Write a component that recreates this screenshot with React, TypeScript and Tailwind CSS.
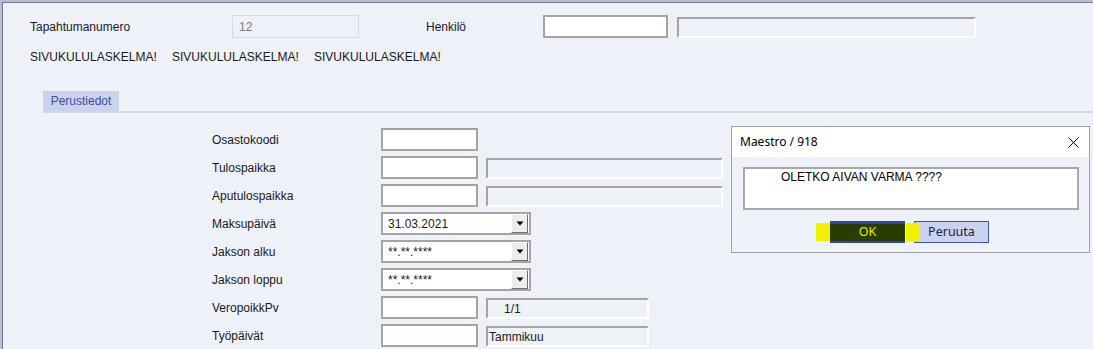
import React from "react";

const Input = ({ w = 97 }: { w?: number }) => (
  <div
    className="h-[23px] border-2 border-[#a4a4a4] bg-white shrink-0"
    style={{ width: w }}
  />
);

const Sunken = ({ w, children, pl = 2 }: { w: number; children?: React.ReactNode; pl?: number }) => (
  <div
    className="h-[21px] self-end shrink-0 border-2 border-t-[#a4a4a4] border-l-[#a4a4a4] border-r-white border-b-white bg-[#eef1f8] flex items-center text-[12px]"
    style={{ width: w, paddingLeft: pl }}
  >
    {children}
  </div>
);

const Dropdown = ({ value }: { value: string }) => (
  <div className="w-[150px] h-[23px] border-2 border-[#a4a4a4] bg-white flex items-center justify-between shrink-0">
    <span className="pl-[5px] leading-[14px]">{value}</span>
    <div className="w-[17px] h-[19px] mr-[1px] bg-[#ececec] border-t border-l border-t-white border-l-white border-r border-b border-r-[#6e6e6e] border-b-[#6e6e6e] flex items-center justify-center">
      <svg width="8" height="5" viewBox="0 0 8 5">
        <path d="M0.5 0.5 L7.5 0.5 L4 4.5 Z" fill="#000" />
      </svg>
    </div>
  </div>
);

const Row = ({ label, children }: { label: string; children: React.ReactNode }) => (
  <div className="flex items-center h-[23px] pl-[209px]">
    <div className="w-[169px] shrink-0">{label}</div>
    {children}
  </div>
);

export default function App() {
  return (
    <div className="w-[1093px] h-[349px] overflow-hidden bg-[#eef1f8] font-['Liberation_Sans',Arial,sans-serif] text-[12px] text-[#1a1a1a] relative">
      <div className="h-full border-t-2 border-l-2 border-[#b3bed8]">
        <div className="h-full border-t border-l border-[#767b88]">
          {/* Row 1 */}
          <div className="mt-[12px] h-[23px] flex items-center pl-[27px]">
            <div className="w-[202px] shrink-0">Tapahtumanumero</div>
            <div className="w-[127px] h-[23px] shrink-0 border border-[#d7dae2] bg-[#eef1f8] text-[#7a7a7a] pl-[6px] flex items-center">
              12
            </div>
            <div className="w-[67px] shrink-0" />
            <div className="w-[117px] shrink-0">Henkilö</div>
            <Input w={125} />
            <div className="w-[9px] shrink-0" />
            <Sunken w={299} />
          </div>

          {/* Row 2 */}
          <div className="mt-[12px] h-[14px] leading-[14px] flex pl-[27px]">
            <div className="w-[142px] shrink-0">SIVUKULULASKELMA!</div>
            <div className="w-[142px] shrink-0">SIVUKULULASKELMA!</div>
            <div className="w-[142px] shrink-0">SIVUKULULASKELMA!</div>
          </div>

          {/* Tabs */}
          <div className="mt-[27px] ml-[40px] border-b-2 border-[#d3d6de]">
            <div className="w-[76px] h-[20px] bg-[#cbd3ec] text-[#3c4ca0] flex items-center justify-center">
              Perustiedot
            </div>
          </div>

          {/* Form */}
          <div className="mt-[15px] flex flex-col gap-[5px]">
            <Row label="Osastokoodi">
              <Input />
            </Row>
            <Row label="Tulospaikka">
              <Input />
              <div className="w-[8px] shrink-0" />
              <Sunken w={237} />
            </Row>
            <Row label="Aputulospaikka">
              <Input />
              <div className="w-[8px] shrink-0" />
              <Sunken w={237} />
            </Row>
            <Row label="Maksupäivä">
              <Dropdown value="31.03.2021" />
            </Row>
            <Row label="Jakson alku">
              <Dropdown value="**.**.****" />
            </Row>
            <Row label="Jakson loppu">
              <Dropdown value="**.**.****" />
            </Row>
            <Row label="VeropoikkPv">
              <Input />
              <div className="w-[8px] shrink-0" />
              <Sunken w={163} pl={16}>
                1/1
              </Sunken>
            </Row>
            <Row label="Työpäivät">
              <Input />
              <div className="w-[8px] shrink-0" />
              <Sunken w={163} pl={1}>
                Tammikuu
              </Sunken>
            </Row>
          </div>
        </div>
      </div>

      {/* Dialog */}
      <div className="absolute left-[731px] top-[126px] w-[359px] h-[127px] border border-[#a0a0a0] bg-[#eef1f8]">
        <div className="h-[30px] bg-white flex items-center justify-between pl-[8px] pr-[10px] font-['Noto_Sans',sans-serif] text-[12px] text-black">
          <span>Maestro / 918</span>
          <svg width="11" height="11" viewBox="0 0 11 11">
            <path d="M0.5 0.5 L10.5 10.5 M10.5 0.5 L0.5 10.5" stroke="#000" strokeWidth="1" />
          </svg>
        </div>
        <div className="mt-[10px] ml-[11px] w-[336px] h-[43px] border-2 border-[#a8a8a8] bg-white pl-[36px] pt-[1px] leading-[14px] text-black">
          OLETKO AIVAN VARMA ????
        </div>
        <div className="mt-[11px] pl-[98px] flex gap-[9px]">
          <div className="w-[75px] h-[22px] bg-[#2c48a8] pt-[3px] pb-[2px]">
            <div className="h-full bg-[#2a3c00] text-[#e8e800] flex items-center justify-center font-['Noto_Sans',sans-serif] text-[12.5px]">
              OK
            </div>
          </div>
          <div className="w-[75px] h-[22px] bg-[#c9d3ef] border border-[#3553b3] text-[#1e1e40] flex items-center justify-center font-['Noto_Sans',sans-serif] text-[12.5px]">
            Peruuta
          </div>
        </div>
        {/* highlighter marks */}
        <div className="absolute left-[84px] top-[96px] w-[14px] h-[18px] bg-[#f0f000]" />
        <div className="absolute left-[174px] top-[96px] w-[13px] h-[19px] bg-[#f0f000] z-10" />
      </div>
    </div>
  );
}
